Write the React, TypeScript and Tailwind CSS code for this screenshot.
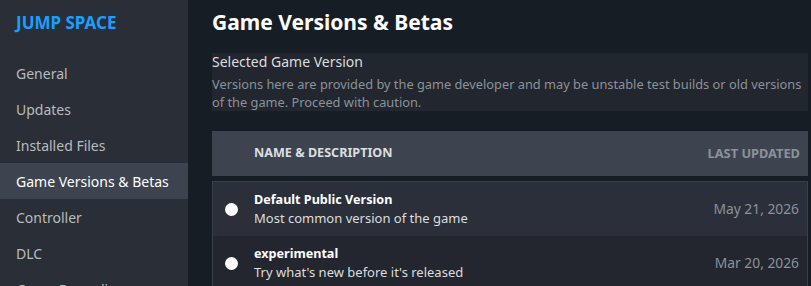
import React from "react";

const navItems = [
  "General",
  "Updates",
  "Installed Files",
  "Game Versions & Betas",
  "Controller",
  "DLC",
  "Game Recording",
];

const rows = [
  { name: "Default Public Version", desc: "Most common version of the game", date: "May 21, 2026", bg: "bg-[#2a2f3a]" },
  { name: "experimental", desc: "Try what's new before it's released", date: "Mar 20, 2026", bg: "bg-[#23262e]" },
];

export default function App() {
  return (
    <div
      className="flex w-[811px] h-[286px] overflow-hidden bg-[#171d25]"
      style={{ fontFamily: '"Noto Sans", "Open Sans", Arial, sans-serif' }}
    >
      <aside className="w-[188px] shrink-0 bg-[#2a2e37] flex flex-col">
        <div className="h-[55px] shrink-0 pl-4 pt-[10px] text-[17px] font-bold text-[#1a9fff] leading-[26px]">JUMP SPACE</div>
        {navItems.map((item) => (
          <div
            key={item}
            className={
              item === "Game Versions & Betas"
                ? "h-9 shrink-0 flex items-center pl-4 text-[14px] text-white bg-[#3d4450]"
                : "h-9 shrink-0 flex items-center pl-4 text-[14px] text-[#b8bcbf]"
            }
          >
            {item}
          </div>
        ))}
      </aside>
      <main className="flex-1 pl-6 pr-[3px] flex flex-col">
        <h1 className="h-[53px] shrink-0 pt-[7px] text-[21px] font-bold text-white leading-[30px]">Game Versions &amp; Betas</h1>
        <div className="bg-[#22262e] h-[58px] shrink-0">
          <div className="text-[14px] text-[#dcdedf] leading-[18px]">Selected Game Version</div>
          <div className="text-[12.8px] text-[#8b929a] leading-[18px] mt-1 whitespace-nowrap">
            Versions here are provided by the game developer and may be unstable test builds or old versions
            <br />
            of the game. Proceed with caution.
          </div>
        </div>
        <div className="mt-5 h-[45px] shrink-0 bg-[#3d4450] flex items-center pl-[42px] pr-2 justify-between">
          <span className="text-[12.6px] font-bold text-[#dcdedf] uppercase">Name &amp; Description</span>
          <span className="text-[12.8px] font-bold text-[#8b929a] uppercase">Last Updated</span>
        </div>
        <div className="mt-[5px] border border-[#3a3f4a] flex flex-col shrink-0">
          {rows.map((r) => (
            <div key={r.name} className={`${r.bg} h-[54px] shrink-0 flex items-center pr-2`}>
              <div className="w-[37px] flex justify-center">
                <div className="w-[13px] h-[13px] rounded-full bg-white" />
              </div>
              <div className="flex-1 flex flex-col ml-[4px]">
                <span className="text-[12.6px] font-bold text-white leading-[18px]">{r.name}</span>
                <span className="text-[13px] text-[#dcdedf] leading-[18px]">{r.desc}</span>
              </div>
              <span className="text-[13.8px] text-[#8b929a]">{r.date}</span>
            </div>
          ))}
        </div>
      </main>
    </div>
  );
}
